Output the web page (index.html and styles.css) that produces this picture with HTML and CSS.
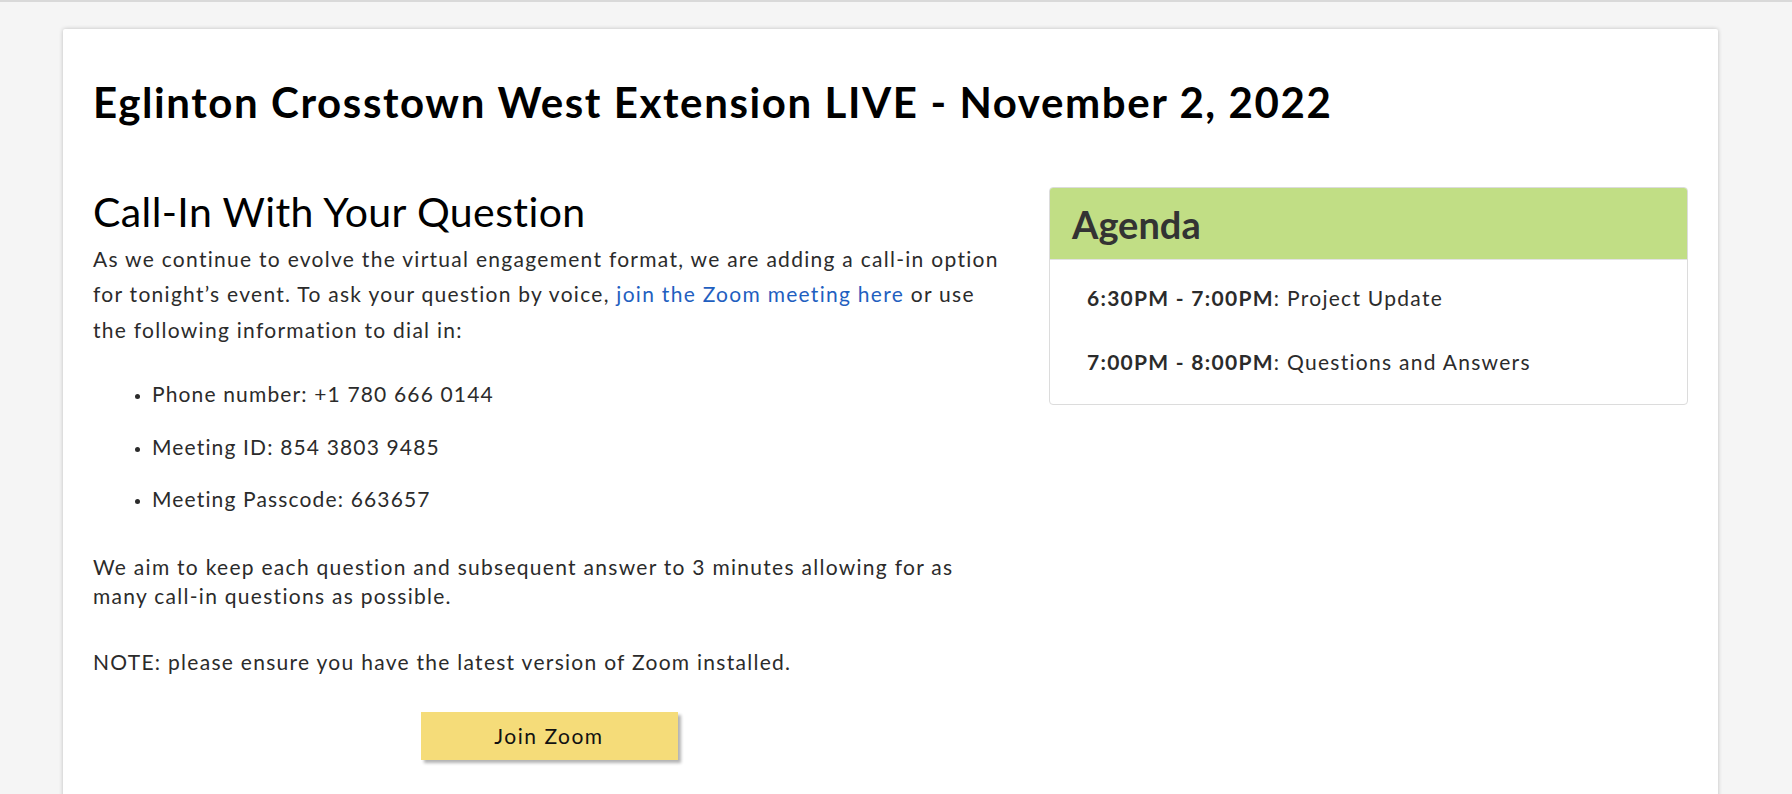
FILE: index.html
```html
<!DOCTYPE html>
<html lang="en">
<head>
<meta charset="utf-8">
<title>Eglinton Crosstown West Extension LIVE</title>
<link rel="stylesheet" href="styles.css">
</head>
<body>
<div class="topline"></div>
<main class="card">
  <h1 class="title">Eglinton Crosstown West Extension LIVE - November 2, 2022</h1>
  <div class="columns">
    <section class="main-col">
      <h2 class="heading">Call-In With Your Question</h2>
      <p class="lead">As we continue to evolve the virtual engagement format, we are adding a call-in option for tonight’s event. To ask your question by voice, <a class="link" href="#">join the Zoom meeting here</a> or use the following information to dial in:</p>
      <ul class="details">
        <li>Phone number: +1 780 666 0144</li>
        <li>Meeting ID: 854 3803 9485</li>
        <li>Meeting Passcode: 663657</li>
      </ul>
      <p class="text">We aim to keep each question and subsequent answer to 3 minutes allowing for as many call-in questions as possible.</p>
      <p class="text note">NOTE: please ensure you have the latest version of Zoom installed.</p>
      <div class="btn-row"><a class="btn" href="#">Join Zoom</a></div>
    </section>
    <aside class="agenda">
      <div class="agenda-head">Agenda</div>
      <div class="agenda-body">
        <p class="agenda-item"><strong>6:30PM - 7:00PM</strong>: Project Update</p>
        <p class="agenda-item"><strong>7:00PM - 8:00PM</strong>: Questions and Answers</p>
      </div>
    </aside>
  </div>
</main>
</body>
</html>
```
FILE: styles.css
```css
* { box-sizing: border-box; }
html, body { margin: 0; padding: 0; }
body {
  background: #f5f5f5;
  font-family: Lato, "Open Sans", sans-serif;
  color: #2b2b2b;
  height: 794px;
  overflow: hidden;
}
.topline {
  height: 2px;
  background: #d9d9d9;
}
.card {
  margin: 27px 0 0 63px;
  width: 1655px;
  min-height: 800px;
  background: #fff;
  box-shadow: 0 0 4px rgba(0,0,0,0.22);
  border-radius: 2px;
  padding: 48px 30px 0 30px;
}
.title {
  margin: 0;
  font-size: 42px;
  line-height: 50px;
  font-weight: 700;
  letter-spacing: 1.6px;
  color: #000;
}
.columns {
  display: grid;
  grid-template-columns: 912px 639px;
  column-gap: 44px;
  margin-top: 61px;
}
.heading {
  margin: 0;
  font-size: 41px;
  line-height: 48px;
  font-weight: 400;
  letter-spacing: 0.4px;
  color: #000;
}
.lead {
  margin: 5px 0 0 0;
  font-size: 21px;
  line-height: 35.4px;
  letter-spacing: 1.28px;
}
.link { color: #1f5fc0; text-decoration: none; }
.details {
  margin: 29px 0 0 0;
  padding: 0 0 0 59px;
  font-size: 21px;
  line-height: 35px;
  letter-spacing: 1.15px;
}
.details li { margin-bottom: 17.5px; }
.details li::marker { font-size: 15px; }
.text {
  margin: 36px 0 0 0;
  font-size: 21px;
  line-height: 29px;
  letter-spacing: 1.28px;
}
.text.note { margin-top: 37px; }
.btn-row {
  display: flex;
  justify-content: center;
  margin-top: 36px;
}
.btn {
  display: block;
  width: 257px;
  height: 48px;
  line-height: 48px;
  text-align: center;
  background: #f5dc79;
  color: #111;
  font-size: 21px;
  letter-spacing: 1.5px;
  text-decoration: none;
  box-shadow: 3px 3px 3px rgba(0,0,0,0.3);
}
.agenda {
  align-self: start;
  margin-top: -1px;
  border: 1px solid #dcdcdc;
  border-radius: 4px;
  overflow: hidden;
}
.agenda-head {
  background: #c1de85;
  height: 72px;
  padding: 12px 22px 0;
  font-size: 38px;
  line-height: 48px;
  font-weight: 700;
  color: #333;
  border-bottom: 1px solid #e2e2e2;
}
.agenda-body {
  padding: 6px 37px 10px;
}
.agenda-item {
  margin: 0;
  font-size: 21px;
  line-height: 64px;
  letter-spacing: 1.28px;
  color: #2b2b2b;
}
.agenda-item strong { font-weight: 700; }
```
